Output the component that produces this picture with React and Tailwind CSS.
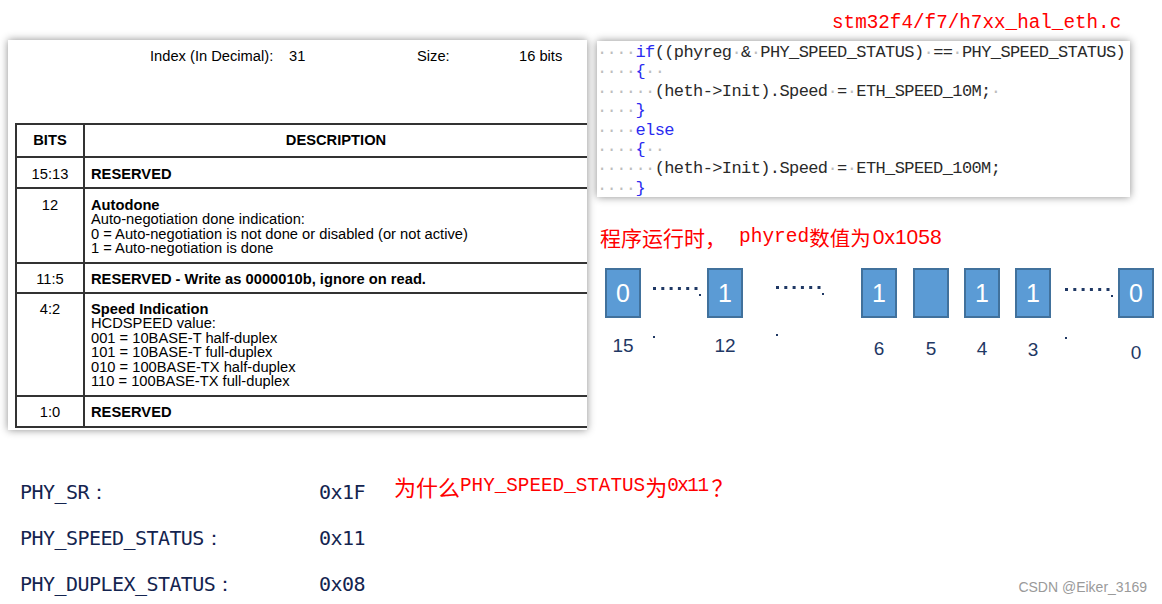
import React from "react";

const K = "k";
const T = "t";
const D = "d";

const codeLines = [
  [[D, "····"], [K, "if"], [T, "((phyreg"], [D, "·"], [T, "&"], [D, "·"], [T, "PHY_SPEED_STATUS)"], [D, "·"], [T, "=="], [D, "·"], [T, "PHY_SPEED_STATUS)"]],
  [[D, "····"], [K, "{"], [D, "··"]],
  [[D, "······"], [T, "(heth->Init).Speed"], [D, "·"], [T, "="], [D, "·"], [T, "ETH_SPEED_10M;"], [D, "·"]],
  [[D, "····"], [K, "}"]],
  [[D, "····"], [K, "else"]],
  [[D, "····"], [K, "{"], [D, "··"]],
  [[D, "······"], [T, "(heth->Init).Speed"], [D, "·"], [T, "="], [D, "·"], [T, "ETH_SPEED_100M;"]],
  [[D, "····"], [K, "}"]],
];

function Seg({ kind, text }) {
  const cls =
    kind === K ? "text-[#2b2bf0]" : kind === D ? "text-[#bdbdbd]" : "text-[#2a2a2a]";
  return <span className={cls}>{text}</span>;
}

function Dots() {
  return (
    <svg width="52" height="12" viewBox="0 0 52 12" className="block">
      {[0, 8.3, 16.6, 24.9, 33.2, 41.5].map((x) => (
        <rect key={x} x={x} y="0" width="3" height="3" fill="#1f3864" />
      ))}
      <rect x="46" y="7" width="2" height="2" fill="#1f3864" />
    </svg>
  );
}

function BitCol({ value, label, mt, ml = "" }) {
  return (
    <div className={`flex flex-col items-center w-[36px] shrink-0 ${ml}`}>
      <div className="w-[36px] h-[50px] bg-[#5b9bd5] border-2 border-[#41719c] flex items-center justify-center text-white text-[25px] leading-none font-['Liberation_Sans']">
        {value}
      </div>
      <div className={`${mt} text-[19px] leading-[22px] text-[#1f3864] font-['Liberation_Sans']`}>
        {label}
      </div>
    </div>
  );
}

function DotsCol({ w, off, mt, belowMt }) {
  return (
    <div className={`${w} shrink-0 flex flex-col`}>
      <div className={`${off} ${mt}`}>
        <Dots />
      </div>
      <div className={`${off} ${belowMt} w-[2px] h-[2px] bg-[#1f3864]`} />
    </div>
  );
}

export default function App() {
  return (
    <div className="w-[1162px] h-[604px] bg-white relative overflow-hidden">
      <div className="flex items-start">
        {/* Left: register table */}
        <div className="ml-[8px] mt-[40px] w-[579px] h-[390px] bg-white shadow-[0_0_8px_rgba(0,0,0,0.45)] font-['Liberation_Sans'] text-[14.7px] text-black overflow-hidden shrink-0">
          <div className="flex mt-[8px] h-[16px] leading-[16px] whitespace-nowrap">
            <div className="ml-[142px] w-[139px]">Index (In Decimal):</div>
            <div className="w-[128px]">31</div>
            <div className="w-[102px]">Size:</div>
            <div>16 bits</div>
          </div>
          <div className="ml-[7px] mt-[59px] w-[572px] border-l-2 border-t-2 border-[#333]">
            <div className="flex h-[33px] border-b-2 border-[#333] font-bold">
              <div className="w-[68px] border-r-2 border-[#333] flex items-center justify-center">BITS</div>
              <div className="flex-1 flex items-center justify-center">DESCRIPTION</div>
            </div>
            <div className="flex h-[31px] border-b-2 border-[#333] leading-[14.4px]">
              <div className="w-[68px] border-r-2 border-[#333] text-center pt-[9px]">15:13</div>
              <div className="flex-1 pl-[6px] pt-[9px] font-bold">RESERVED</div>
            </div>
            <div className="flex h-[75px] border-b-2 border-[#333] leading-[14.4px]">
              <div className="w-[68px] border-r-2 border-[#333] text-center pt-[9px]">12</div>
              <div className="flex-1 pl-[6px] pt-[9px]">
                <div className="font-bold">Autodone</div>
                <div>Auto-negotiation done indication:</div>
                <div>0 = Auto-negotiation is not done or disabled (or not active)</div>
                <div>1 = Auto-negotiation is done</div>
              </div>
            </div>
            <div className="flex h-[30px] border-b-2 border-[#333] leading-[14.4px]">
              <div className="w-[68px] border-r-2 border-[#333] text-center pt-[8px]">11:5</div>
              <div className="flex-1 pl-[6px] pt-[8px] font-bold">RESERVED - Write as 0000010b, ignore on read.</div>
            </div>
            <div className="flex h-[103px] border-b-2 border-[#333] leading-[14.4px]">
              <div className="w-[68px] border-r-2 border-[#333] text-center pt-[8px]">4:2</div>
              <div className="flex-1 pl-[6px] pt-[8px]">
                <div className="font-bold">Speed Indication</div>
                <div>HCDSPEED value:</div>
                <div>001 = 10BASE-T half-duplex</div>
                <div>101 = 10BASE-T full-duplex</div>
                <div>010 = 100BASE-TX half-duplex</div>
                <div>110 = 100BASE-TX full-duplex</div>
              </div>
            </div>
            <div className="flex h-[31px] border-b-2 border-[#333] leading-[14.4px]">
              <div className="w-[68px] border-r-2 border-[#333] text-center pt-[8px]">1:0</div>
              <div className="flex-1 pl-[6px] pt-[8px] font-bold">RESERVED</div>
            </div>
          </div>
        </div>

        {/* Right column */}
        <div className="ml-[10px] w-[565px] flex flex-col shrink-0">
          <div className="mt-[11px] pl-[235px] h-[24px] leading-[24px] text-[19.3px] text-[#ff0000] font-['Liberation_Mono'] whitespace-nowrap">
            stm32f4/f7/h7xx_hal_eth.c
          </div>
          <div className="mt-[6px] w-[533px] h-[156px] bg-white shadow-[0_0_8px_rgba(0,0,0,0.45)] pt-[2px] font-['Liberation_Mono'] text-[17px] tracking-[-0.6px] leading-[19.4px] whitespace-pre">
            {codeLines.map((line, i) => (
              <div key={i} className="h-[19.4px]">
                {line.map(([k, t], j) => (
                  <Seg key={j} kind={k} text={t} />
                ))}
              </div>
            ))}
          </div>
          <div className="mt-[27px] pl-[3px] h-[26px] leading-[26px] text-[#ff0000] whitespace-nowrap flex items-center">
            <span className="text-[21px] font-['Noto_Sans_CJK_SC']">程序运行时，</span>
            <span className="ml-[13px] text-[19.5px] font-['Liberation_Mono']">phyred</span>
            <span className="text-[20.5px] font-['Noto_Sans_CJK_SC']">数值为</span>
            <span className="ml-[2px] text-[21px] font-['Liberation_Sans']">0x1058</span>
          </div>
          <div className="mt-[18px] pl-[8px] flex items-start">
            <BitCol value="0" label="15" mt="mt-[17px]" />
            <DotsCol w="w-[66px]" off="ml-[12px]" mt="mt-[19px]" belowMt="mt-[37px]" />
            <BitCol value="1" label="12" mt="mt-[17px]" />
            <DotsCol w="w-[118px]" off="ml-[33px]" mt="mt-[18px]" belowMt="mt-[36px]" />
            <BitCol value="1" label="6" mt="mt-[20px]" />
            <BitCol value="" label="5" mt="mt-[20px]" ml="ml-[16px]" />
            <BitCol value="1" label="4" mt="mt-[20px]" ml="ml-[15px]" />
            <BitCol value="1" label="3" mt="mt-[21px]" ml="ml-[15px]" />
            <DotsCol w="w-[67px]" off="ml-[14px]" mt="mt-[20px]" belowMt="mt-[37px]" />
            <BitCol value="0" label="0" mt="mt-[24px]" />
          </div>
        </div>
      </div>

      {/* Bottom definitions */}
      <div className="mt-[39px] flex flex-col font-['DejaVu_Sans_Mono'] text-[20px] tracking-[-0.55px] text-[#14244f] whitespace-nowrap">
        <div className="h-[46px] flex items-center pl-[20px]">
          <div className="w-[299px]">PHY_SR：</div>
          <div className="w-[75px]">0x1F</div>
          <div className="mb-[12px] flex items-center text-[#ff0000] tracking-normal">
            <span className="text-[22px] font-['Noto_Sans_CJK_SC']">为什么</span>
            <span className="text-[19.3px] font-['Liberation_Mono']">PHY_SPEED_STATUS</span>
            <span className="text-[22px] font-['Noto_Sans_CJK_SC']">为</span>
            <span className="text-[19.3px] font-['Liberation_Mono'] tracking-[-1.5px]">0x11</span>
            <span className="ml-[4px] text-[22px] font-['Noto_Sans_CJK_SC']">？</span>
          </div>
        </div>
        <div className="h-[46px] flex items-center pl-[20px]">
          <div className="w-[299px]">PHY_SPEED_STATUS：</div>
          <div className="w-[75px]">0x11</div>
        </div>
        <div className="h-[46px] flex items-center pl-[20px]">
          <div className="w-[299px]">PHY_DUPLEX_STATUS：</div>
          <div className="w-[75px]">0x08</div>
        </div>
      </div>

      <div className="absolute right-[15px] bottom-[9px] text-[14px] leading-[16px] text-[#9a9a9a] font-['Liberation_Sans']">
        CSDN @Eiker_3169
      </div>
    </div>
  );
}
